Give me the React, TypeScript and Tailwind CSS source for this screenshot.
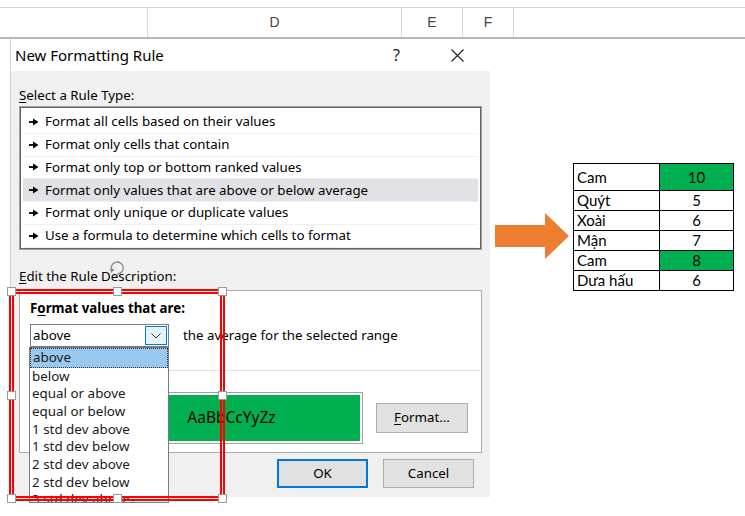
import React from "react";

const ruleTypes = [
  "Format all cells based on their values",
  "Format only cells that contain",
  "Format only top or bottom ranked values",
  "Format only values that are above or below average",
  "Format only unique or duplicate values",
  "Use a formula to determine which cells to format",
];

const dropItems = [
  "above",
  "below",
  "equal or above",
  "equal or below",
  "1 std dev above",
  "1 std dev below",
  "2 std dev above",
  "2 std dev below",
  "3 std dev above",
];

const tableRows: { name: string; value: string; green: boolean; tall?: boolean }[] = [
  { name: "Cam", value: "10", green: true, tall: true },
  { name: "Quýt", value: "5", green: false },
  { name: "Xoài", value: "6", green: false },
  { name: "Mận", value: "7", green: false },
  { name: "Cam", value: "8", green: true },
  { name: "Dưa hấu", value: "6", green: false },
];

function Bullet() {
  return (
    <svg width="10" height="8" viewBox="0 0 10 8" className="shrink-0">
      <rect x="0" y="3.1" width="5" height="1.8" fill="#000" />
      <polygon points="4,0.5 9.5,4 4,7.5" fill="#000" />
    </svg>
  );
}

function Handle({ x, y }: { x: number; y: number }) {
  return (
    <div
      className="absolute w-[9px] h-[9px] bg-white border border-[#9a9a9a]"
      style={{ left: x - 4.5, top: y - 4.5 }}
    />
  );
}

export default function App() {
  return (
    <div className="w-[745px] h-[516px] bg-white relative overflow-hidden font-['Noto_Sans',sans-serif] text-[#000]">
      {/* spreadsheet header */}
      <div className="h-[7px]" />
      <div className="h-[32px] flex border-t border-[#d4d4d4] border-b-2 border-b-[#b8b8b8] text-[14px] text-[#444] font-['Liberation_Sans',sans-serif]">
        <div className="w-[148px] border-r border-[#d8d8d8]" />
        <div className="w-[254px] border-r border-[#d8d8d8] flex items-center justify-center">D</div>
        <div className="w-[61px] border-r border-[#d8d8d8] flex items-center justify-center">E</div>
        <div className="w-[51px] border-r border-[#d8d8d8] flex items-center justify-center">F</div>
        <div className="flex-1" />
      </div>

      <div className="flex items-start">
        <div className="w-[10px]" />
        {/* dialog */}
        <div className="w-[480px] flex flex-col border-l border-[#cfcfcf]">
          <div className="h-[32px] bg-white flex items-center pl-[4px] text-[15px]">
            <span className="flex-1">New Formatting Rule</span>
            <span className="text-[16px] mr-[51px] text-[#222]">?</span>
            <svg width="13" height="13" viewBox="0 0 13 13" className="mr-[26px]">
              <path d="M0.5 0.5 L12.5 12.5 M12.5 0.5 L0.5 12.5" stroke="#222" strokeWidth="1.1" />
            </svg>
          </div>
          <div className="h-[426px] bg-[#f0f0f0] pl-[8px] pr-[8px] flex flex-col text-[13.3px]">
            <div className="mt-[15px] h-[19px] leading-[19px]">
              <span className="underline underline-offset-2">S</span>elect a Rule Type:
            </div>
            <div className="mt-[1px] h-[144px] border border-[#a0a0a0] bg-white">
              <div className="h-full border border-[#646464] pt-[3px] px-[2px] flex flex-col">
                {ruleTypes.map((t, i) => (
                  <div
                    key={t}
                    className={`h-[22.8px] shrink-0 flex items-center gap-[6px] pl-[6px] border-b border-[#f0f0f0] ${
                      i === 3 ? "bg-[#e2e2e6]" : ""
                    }`}
                  >
                    <Bullet />
                    <span className="leading-none">{t}</span>
                  </div>
                ))}
              </div>
            </div>
            <div className="mt-[17px] h-[19px] leading-[19px]">
              <span className="underline underline-offset-2">E</span>dit the Rule Description:
            </div>
            <div className="mt-[4px] h-[163px] bg-white border border-[#adadad] flex flex-col pl-[10px] pr-[1px]">
              <div className="mt-[8px] h-[19px] leading-[19px] font-bold">
                F<span className="underline underline-offset-2">o</span>rmat values that are:
              </div>
              <div className="mt-[6px] flex items-center">
                <div className="w-[139px] h-[23px] border border-[#7a7a7a] bg-white flex items-center justify-between pl-[2px] pr-[1px]">
                  <span>above</span>
                  <div className="w-[22px] h-[19px] border border-[#0078d7] bg-[#e5f1fb] flex items-center justify-center">
                    <svg width="10" height="6" viewBox="0 0 10 6">
                      <path d="M0.5 0.5 L5 5 L9.5 0.5" stroke="#333" strokeWidth="1" fill="none" />
                    </svg>
                  </div>
                </div>
                <span className="ml-[14px]">the average for the selected range</span>
              </div>
              <div className="mt-[23px] h-px bg-[#e3e3e3]" />
              <div className="mt-[21px] flex items-center">
                <div className="ml-[70px] w-[263px] h-[52px] border border-[#a0a0a0] p-[2px] bg-white">
                  <div className="h-full bg-[#00b050] flex items-center justify-center text-[15.5px]">AaBbCcYyZz</div>
                </div>
                <div className="ml-[13px] w-[92px] h-[30px] bg-[#e1e1e1] border border-[#adadad] flex items-center justify-center">
                  <span>
                    <span className="underline underline-offset-2">F</span>ormat...
                  </span>
                </div>
              </div>
            </div>
            <div className="mt-[6px] flex justify-end pr-[8px] gap-[15px]">
              <div className="w-[91px] h-[29px] bg-[#e1e1e1] border-2 border-[#0078d7] flex items-center justify-center">OK</div>
              <div className="w-[91px] h-[29px] bg-[#e1e1e1] border border-[#adadad] flex items-center justify-center">Cancel</div>
            </div>
          </div>
        </div>

        {/* arrow */}
        <svg width="76" height="46" viewBox="0 0 76 46" className="ml-[5px] mt-[174px]">
          <polygon points="0,12 50,12 50,0 74,23 50,46 50,34 0,34" fill="#ed7d31" />
        </svg>

        {/* table */}
        <table className="ml-[2px] mt-[124px] border-collapse font-['Lato',sans-serif] text-[15px]">
          <tbody>
            {tableRows.map((r, i) => (
              <tr key={i} className={r.tall ? "h-[27px]" : "h-[20px]"}>
                <td className="w-[86px] border border-black pl-[3px] leading-none">{r.name}</td>
                <td
                  className={`w-[74px] border border-black text-center leading-none ${r.green ? "bg-[#00b050]" : ""}`}
                >
                  {r.value}
                </td>
              </tr>
            ))}
          </tbody>
        </table>
      </div>

      {/* dropdown list overlay */}
      <div className="absolute left-[29px] top-[347px] w-[140px] h-[156px] bg-white border border-[#7a7a7a] overflow-hidden text-[13.4px] text-[#1a1a1a]">
        {dropItems.map((d, i) => (
          <div
            key={d}
            className={`flex items-center pl-[2px] leading-none ${
              i === 0 ? "h-[19.5px] bg-[#99c9ef] border border-dotted border-[#333]" : "h-[17.7px]"
            }`}
          >
            {d}
          </div>
        ))}
      </div>

      {/* selection frame */}
      <div className="absolute left-[9px] top-[289px] w-[216px] h-[212px] border-[5px] border-double border-[#ff0000]" />
      <Handle x={11.5} y={291.5} />
      <Handle x={117} y={291.5} />
      <Handle x={222.5} y={291.5} />
      <Handle x={11.5} y={395} />
      <Handle x={222.5} y={395} />
      <Handle x={11.5} y={498.5} />
      <Handle x={117} y={498.5} />
      <Handle x={222.5} y={498.5} />
      {/* rotate handle */}
      <svg width="18" height="18" viewBox="0 0 18 18" className="absolute left-[108px] top-[259px]">
        <path d="M4 12 A6 6 0 1 1 9 15" stroke="#8a8a8a" strokeWidth="1.3" fill="none" />
        <polygon points="2,9 6.5,10.5 3,14" fill="#8a8a8a" />
      </svg>
    </div>
  );
}
